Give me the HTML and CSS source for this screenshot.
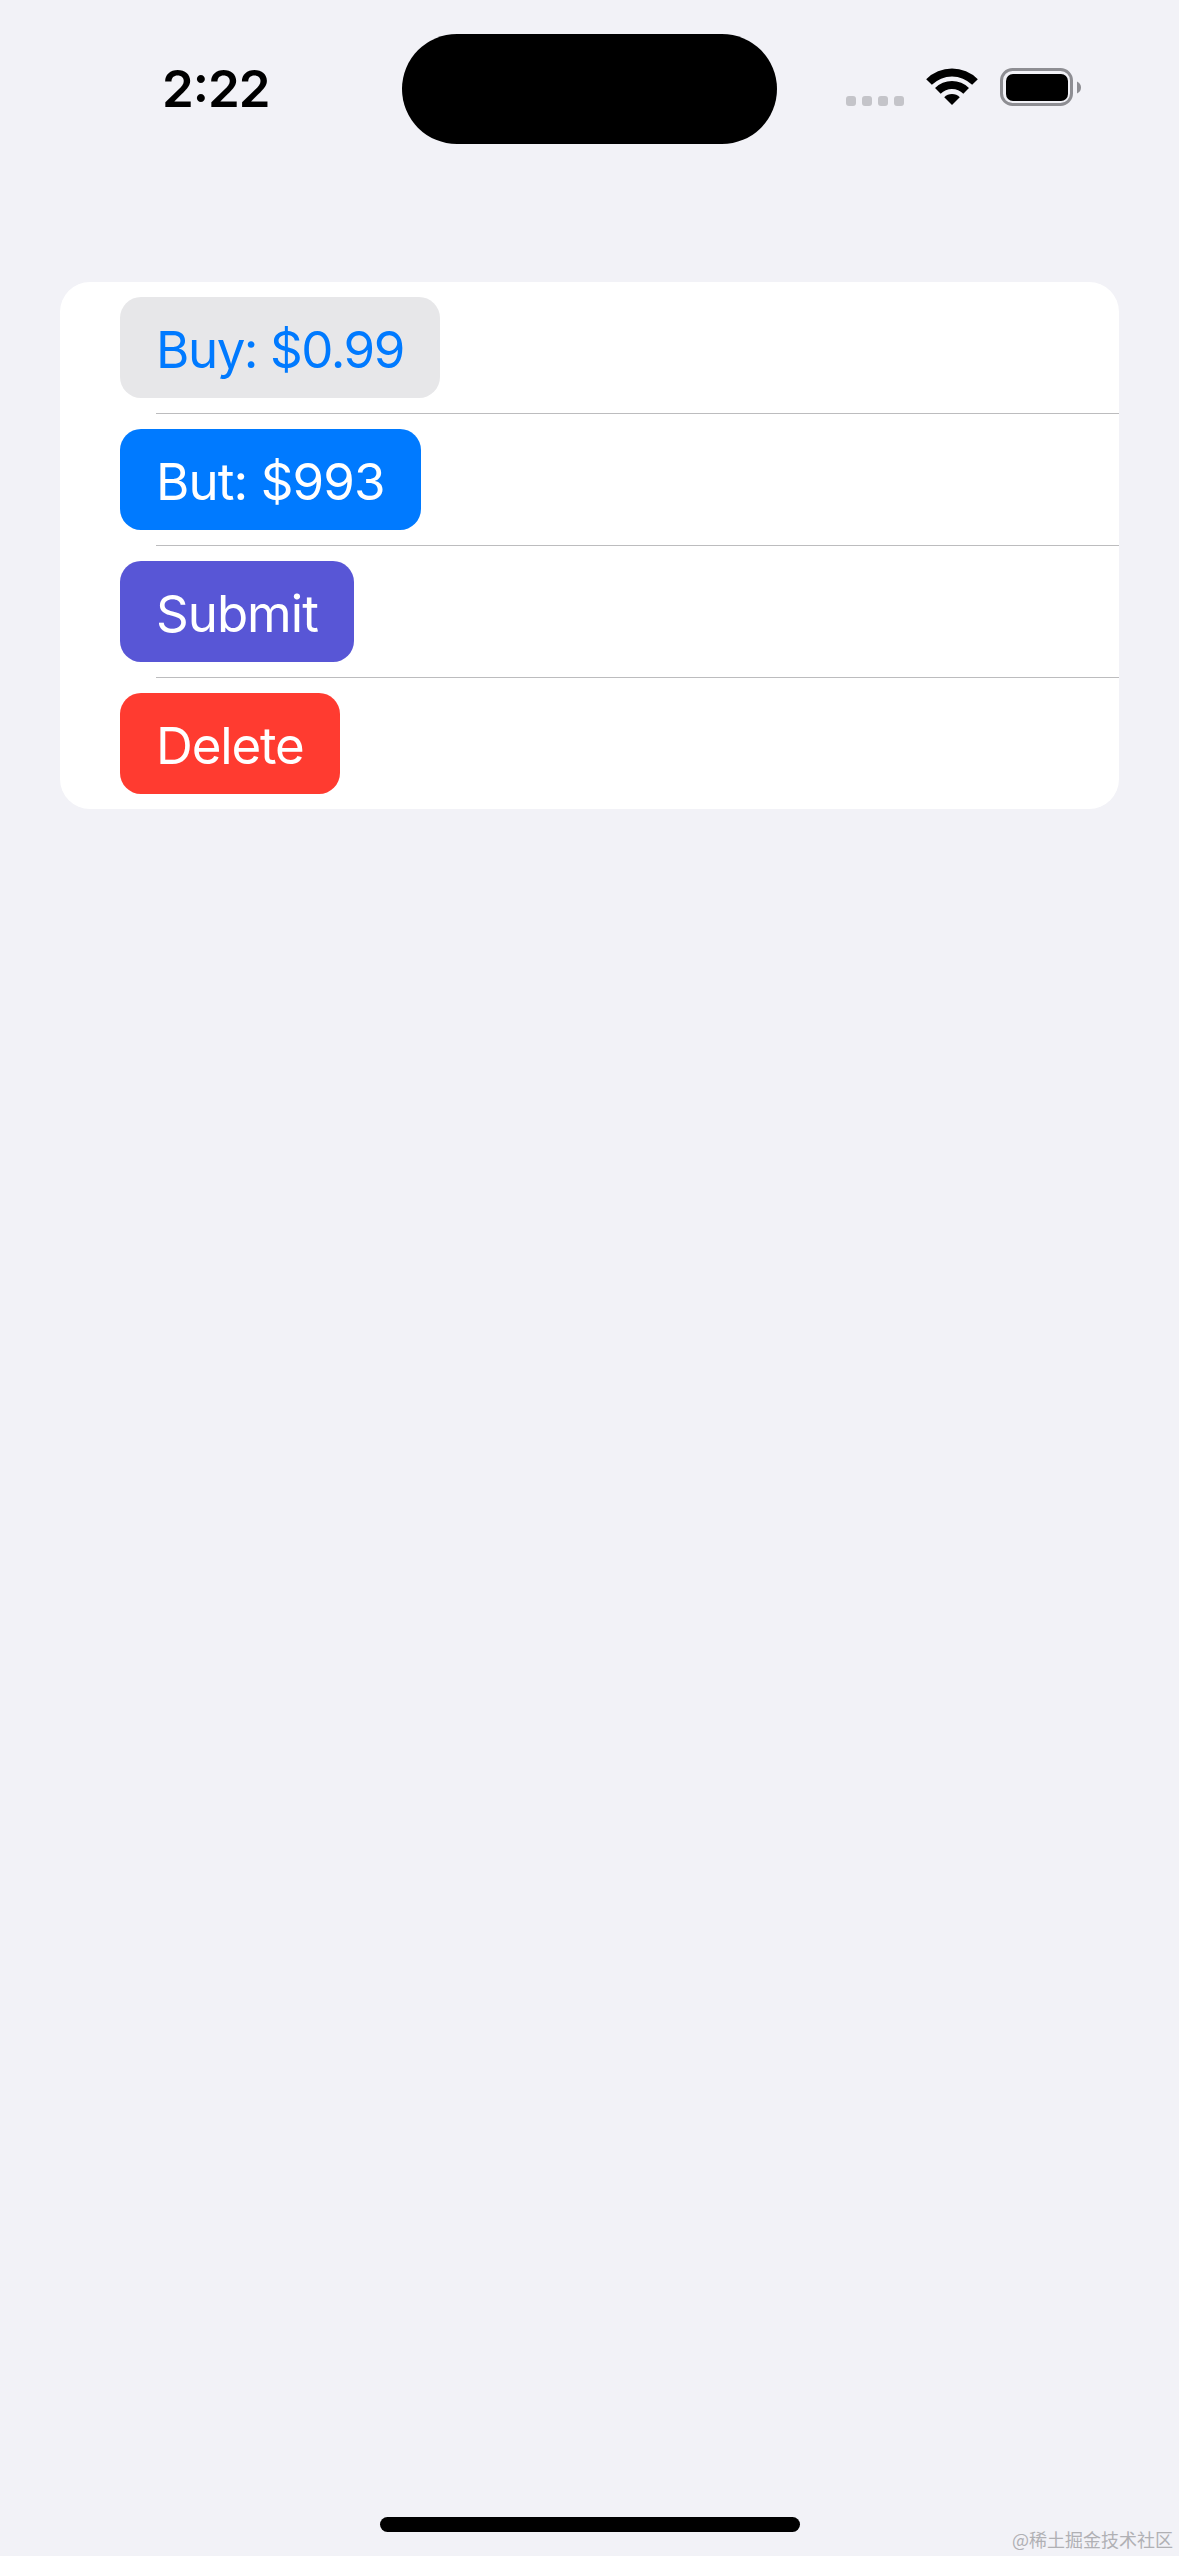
FILE: index.html
```html
<!DOCTYPE html>
<html lang="en">
<head>
<meta charset="utf-8">
<title>Buttons</title>
<link rel="stylesheet" href="styles.css">
</head>
<body>
<div class="page">
  <header class="status-bar">
    <span class="time">2:22</span>
    <div class="island"></div>
    <div class="signal"><i></i><i></i><i></i><i></i></div>
    <svg class="wifi" width="52" height="38" viewBox="0 0 52 38" aria-hidden="true">
      <path d="M0.19 11.19A36.5 36.5 0 0 1 51.81 11.19L46.15 16.85A28.5 28.5 0 0 0 5.85 16.85Z"/>
      <path d="M9.03 20.03A24 24 0 0 1 42.97 20.03L37.31 25.69A16 16 0 0 0 14.69 25.69Z"/>
      <path d="M18.22 29.22A11 11 0 0 1 33.78 29.22L26 37Z"/>
    </svg>
    <svg class="battery" width="82" height="38" viewBox="0 0 82 38" aria-hidden="true">
      <rect class="battery-shell" x="1.5" y="1.5" width="70" height="35" rx="11"/>
      <rect x="6" y="6" width="62" height="27" rx="7"/>
      <path class="battery-cap" d="M77 13.5C80 15 81 17 81 19.5C81 22 80 24 77 25.5Z"/>
    </svg>
  </header>
  <main class="content">
    <section class="list">
      <div class="row"><button class="btn btn-gray">Buy: $0.99</button></div>
      <div class="sep"></div>
      <div class="row"><button class="btn btn-blue">But: $993</button></div>
      <div class="sep"></div>
      <div class="row"><button class="btn btn-indigo">Submit</button></div>
      <div class="sep"></div>
      <div class="row"><button class="btn btn-red">Delete</button></div>
    </section>
  </main>
  <div class="home-bar"></div>
  <div class="watermark">@稀土掘金技术社区</div>
</div>
</body>
</html>
```
FILE: styles.css
```css
* { box-sizing: border-box; }
html, body { margin: 0; padding: 0; }
body { background: #f2f2f7; font-family: Inter, "Liberation Sans", sans-serif; }
.page {
  position: relative;
  display: flex;
  flex-direction: column;
  width: 1179px;
  height: 2556px;
  overflow: hidden;
}
.status-bar {
  display: flex;
  align-items: flex-start;
  height: 282px;
  padding-top: 34px;
  flex: none;
}
.time {
  width: 240px;
  margin-left: 162px;
  margin-top: 24px;
  font-size: 51px;
  line-height: 62px;
  font-weight: 600;
  letter-spacing: -1px;
  font-feature-settings: "case";
  color: #000;
}
.island {
  width: 375px;
  height: 110px;
  border-radius: 55px;
  background: #000;
}
.signal {
  display: flex;
  gap: 6px;
  margin-left: 69px;
  margin-top: 62px;
}
.signal i {
  display: block;
  width: 10px;
  height: 10px;
  border-radius: 3px;
  background: #c4c4c9;
}
.wifi { margin-left: 22px; margin-top: 34px; fill: #000; }
.battery { margin-left: 22px; margin-top: 34px; fill: #000; }
.battery-shell { fill: none; stroke: #8e8e93; stroke-width: 3; }
.battery-cap { fill: #8e8e93; }
.content { flex: 1; padding: 0 60px; }
.list {
  background: #fff;
  border-radius: 30px;
  overflow: hidden;
}
.row { display: flex; padding: 15px 60px; }
.sep { height: 1px; margin-left: 96px; background: #bcbcbe; }
.btn {
  display: block;
  height: 101px;
  padding: 3px 36px 0;
  border: 0;
  border-radius: 21px;
  font-family: inherit;
  font-size: 51px;
  font-weight: 400;
  letter-spacing: -0.9px;
  color: #fff;
}
.btn-gray { background: #e7e7e9; color: #007aff; letter-spacing: -1.45px; }
.btn-blue { background: #007aff; }
.btn-indigo { background: #5856d6; letter-spacing: -1px; }
.btn-red { background: #ff3b30; letter-spacing: -1.15px; }
.home-bar {
  flex: none;
  align-self: center;
  width: 420px;
  height: 15px;
  margin-bottom: 24px;
  border-radius: 8px;
  background: #000;
}
.watermark {
  position: absolute;
  right: 6px;
  bottom: 5px;
  font-family: "Noto Sans CJK SC", sans-serif;
  font-size: 18px;
  line-height: 24px;
  color: #b0b0b4;
}
```
